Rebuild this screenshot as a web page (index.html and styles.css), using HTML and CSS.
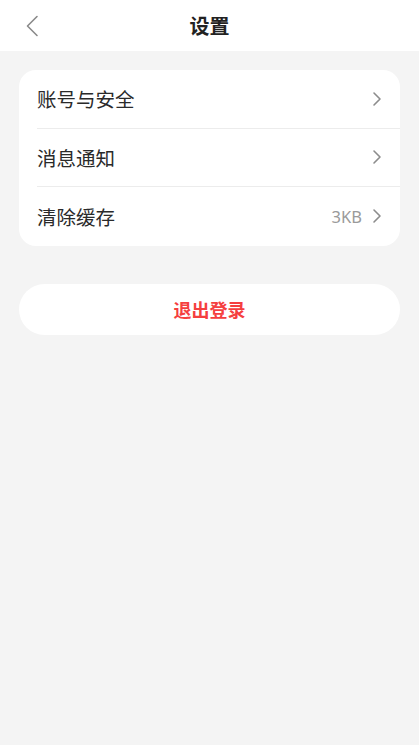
FILE: index.html
```html
<!DOCTYPE html>
<html lang="zh">
<head>
<meta charset="utf-8">
<link rel="stylesheet" href="styles.css">
</head>
<body>
<div class="page">
  <header class="nav">
    <span class="back">
      <svg width="14" height="22" viewBox="0 0 14 22"><path d="M12 1.5 L2.5 11 L12 20.5" fill="none" stroke="#8a8a8a" stroke-width="1.6" stroke-linecap="round" stroke-linejoin="round"/></svg>
    </span>
    <h1 class="title">设置</h1>
  </header>
  <main class="content">
    <section class="card">
      <div class="row"><span class="label">账号与安全</span><span class="right"><svg class="chev" width="10" height="16" viewBox="0 0 10 16"><path d="M2 2 L8 8 L2 14" fill="none" stroke="#8c8c8c" stroke-width="1.6" stroke-linecap="round" stroke-linejoin="round"/></svg></span></div>
      <div class="row"><span class="label">消息通知</span><span class="right"><svg class="chev" width="10" height="16" viewBox="0 0 10 16"><path d="M2 2 L8 8 L2 14" fill="none" stroke="#8c8c8c" stroke-width="1.6" stroke-linecap="round" stroke-linejoin="round"/></svg></span></div>
      <div class="row"><span class="label">清除缓存</span><span class="right"><span class="value">3KB</span><svg class="chev" width="10" height="16" viewBox="0 0 10 16"><path d="M2 2 L8 8 L2 14" fill="none" stroke="#8c8c8c" stroke-width="1.6" stroke-linecap="round" stroke-linejoin="round"/></svg></span></div>
    </section>
    <button class="logout">退出登录</button>
  </main>
</div>
</body>
</html>
```
FILE: styles.css
```css
* { box-sizing: border-box; }
html, body { margin: 0; padding: 0; }
body {
  background: #f4f4f4;
  font-family: "Noto Sans CJK SC", "Noto Sans", sans-serif;
  color: #222;
  width: 419px;
  min-height: 745px;
}
.page { min-height: 745px; background: #f4f4f4; }
.nav {
  height: 51px;
  background: #fff;
  display: flex;
  align-items: center;
  justify-content: center;
  position: relative;
}
.back {
  position: absolute;
  left: 25px;
  top: 15px;
  width: 14px;
  height: 22px;
  display: flex;
}
.title {
  margin: 0;
  font-size: 20px;
  font-weight: 700;
  color: #222;
  line-height: 1;
}
.content {
  padding: 19px 19px 0;
  display: flex;
  flex-direction: column;
  gap: 38px;
}
.card {
  background: #fff;
  border-radius: 17px;
  padding-left: 18px;
}
.row {
  height: 58.5px;
  display: flex;
  align-items: center;
  justify-content: space-between;
  padding-right: 18px;
  border-bottom: 1px solid #ececec;
}
.row:last-child { border-bottom: none; }
.label {
  font-size: 19.5px;
  color: #2a2a2a;
}
.right {
  display: flex;
  align-items: center;
  gap: 10px;
}
.value {
  font-size: 16.5px;
  color: #9a9a9a;
  font-family: "Noto Sans", sans-serif;
}
.chev { display: block; }
.logout {
  height: 51px;
  border: none;
  background: #fff;
  border-radius: 26px;
  font-family: "Noto Sans CJK SC", sans-serif;
  font-size: 18px;
  font-weight: 700;
  color: #f53f3f;
  padding: 0;
}
```
